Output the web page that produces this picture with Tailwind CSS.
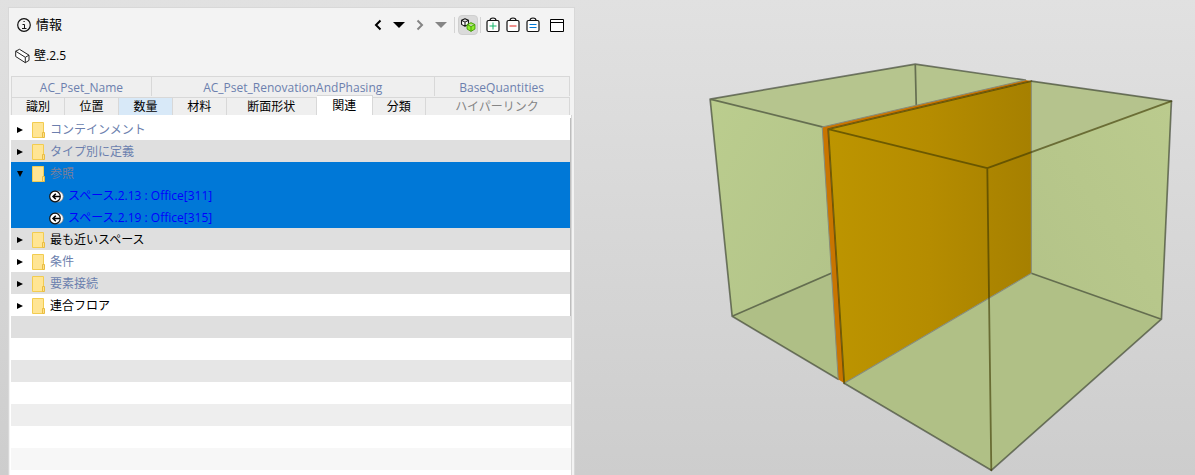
<!DOCTYPE html>
<html lang="ja">
<head>
    <meta charset="UTF-8">
    <meta name="viewport" content="width=device-width, initial-scale=1.0">
    <title>情報 - 壁.2.5</title>
    <script src="https://cdn.jsdelivr.net/npm/@tailwindcss/browser@4"></script>
</head>
<body class="h-screen overflow-hidden bg-linear-to-b from-[#e1e1e1] to-[#cdcdcd] font-['Open_Sans','Noto_Sans_CJK_JP',sans-serif] text-xs text-black">
    <!-- Shared icons -->
    <svg class="hidden">
        <symbol id="folder" viewBox="0 0 14 16">
            <path d="M.5.5h11v15H.5z" fill="#ffe594" stroke="#f2cc50"/>
            <path d="M10.500 15.500v-5h2v5z" fill="#ffe08a" stroke="#e9bd42"/>
        </symbol>
        <symbol id="space" viewBox="0 0 15 13">
            <ellipse cx="8.500" cy="6.500" rx="5.800" ry="5.500" fill="#fff" stroke="#777" stroke-width=".8"/>
            <circle cx="6" cy="6.500" r="5.300" fill="#fff" stroke="#111" stroke-width="1.200"/>
            <path d="M11 6.500H4M6.800 3.700 4 6.500l2.800 2.800" fill="none" stroke="#000" stroke-width="1.500"/>
        </symbol>
        <symbol id="bag" viewBox="0 0 14 16">
            <rect x="1" y="3.500" width="12" height="11" rx="1.500" fill="#fff" stroke="#111" stroke-width="1.200"/>
            <path d="M4 3.500Q4 1 7 1T10 3.500" fill="none" stroke="#111" stroke-width="1.200"/>
        </symbol>
        <symbol id="right" viewBox="0 0 6 6"><path d="M0 0 6 3 0 6z"/></symbol>
        <symbol id="down" viewBox="0 0 6 6"><path d="M0 0h6L3 6z"/></symbol>
        <symbol id="cube" viewBox="0 0 10 11">
            <path d="M5 .7 9.300 2.800v5L5 10.300.7 7.800v-5zM.7 2.800 5 5l4.300-2.200M5 5v5.300" stroke-linejoin="round"/>
        </symbol>
    </svg>

    <div class="grid h-full grid-cols-[21fr_23fr] pl-2">
        <section class="mt-[7px] flex min-w-0 flex-col border-x border-t border-[#d8d8d8] bg-[#f3f3f3]">
            <header class="flex h-[34px] items-center justify-between pr-[3px] pl-[7px]">
                <h1 class="flex items-center gap-1 text-[13px]">
                    <svg class="size-4" viewBox="0 0 16 16" fill="none" stroke="#111">
                        <circle cx="8" cy="8" r="6.300" stroke-width="1.200"/>
                        <path d="M6.500 7.500h2v4M6 11.500h4.500M7.500 4.500h1.200"/>
                    </svg>
                    情報
                </h1>
                <div class="flex items-center pb-px">
                    <button aria-label="戻る" class="flex h-5 w-[21px] items-center justify-center">
                        <svg class="h-3 w-2" viewBox="0 0 8 12" fill="none" stroke="#000" stroke-width="2"><path d="M6.500 1.500 2 6l4.500 4.500"/></svg>
                    </button>
                    <button aria-label="戻る履歴" class="flex h-5 w-[21px] items-center justify-center">
                        <svg class="h-[6px] w-3" viewBox="0 0 12 6"><path d="M0 0h12L6 6z"/></svg>
                    </button>
                    <button aria-label="進む" class="flex h-5 w-[21px] items-center justify-center">
                        <svg class="h-3 w-2" viewBox="0 0 8 12" fill="none" stroke="#858585" stroke-width="2"><path d="M1.500 1.500 6 6l-4.500 4.500"/></svg>
                    </button>
                    <button aria-label="進む履歴" class="flex h-5 w-[21px] items-center justify-center">
                        <svg class="h-[6px] w-3" viewBox="0 0 12 6" fill="#858585"><path d="M0 0h12L6 6z"/></svg>
                    </button>
                    <span class="mr-[3px] ml-[2px] h-4 w-px bg-[#d4d4d4]"></span>
                    <button aria-label="要素を表示" aria-pressed="true" class="flex size-5 items-center justify-center rounded-sm border border-[#cfcfcf] bg-[#dadada]">
                        <svg class="h-4 w-4 shrink-0" viewBox="0 0 16 16">
                            <use href="#cube" x="1" y="1" width="8" height="9" fill="#fff" stroke="#111" stroke-width="1.300"/>
                            <use href="#cube" x="6" y="5" width="10" height="10" fill="#8eee2a" stroke="#3f9a00"/>
                        </svg>
                    </button>
                    <span class="mx-[2px] h-4 w-px bg-[#d4d4d4]"></span>
                    <button aria-label="追加" class="flex h-5 w-5 items-center justify-center">
                        <svg class="h-4 w-[14px]" viewBox="0 0 14 16"><use href="#bag"/><path d="M3.500 9h7M7 5.500v7" stroke="#12b76a"/></svg>
                    </button>
                    <button aria-label="削除" class="flex h-5 w-5 items-center justify-center">
                        <svg class="h-4 w-[14px]" viewBox="0 0 14 16"><use href="#bag"/><path d="M3.500 9h7" stroke="#e0201b"/></svg>
                    </button>
                    <button aria-label="置換" class="flex h-5 w-5 items-center justify-center">
                        <svg class="h-4 w-[14px]" viewBox="0 0 14 16"><use href="#bag"/><path d="M3.500 7.500h7M3.500 10.500h7" stroke="#0078d7"/></svg>
                    </button>
                    <button aria-label="ウィンドウ" class="flex h-5 w-7 items-center justify-center">
                        <svg class="size-[14px]" viewBox="0 0 14 14" fill="#fff" stroke="#000"><path d="M.5 1.500h13v12H.5zM.5 4.500h13"/></svg>
                    </button>
                </div>
            </header>

            <h2 class="flex h-[34px] items-center gap-1 pb-[6px] pl-[6px] text-xs">
                <svg class="h-4 w-[15px]" viewBox="0 0 15 16" fill="#fff" stroke="#222" stroke-linejoin="round">
                    <path d="M.7 3.200 4.500 1.300 14 7.200v5.200l-3.700 2.300L.7 8.500z"/>
                    <path d="M.7 3.200 10.300 9.300 14 7.200M10.300 9.300v5.400" fill="none"/>
                </svg>
                壁.2.5
            </h2>

            <div role="tablist" class="mr-1 ml-[2px] border-l border-[#d8d8d8] bg-[#efefef]">
                <div class="grid h-[19px] grid-cols-[140fr_283fr_135fr] border-t border-[#d8d8d8] text-[#6c7fae]">
                    <button role="tab" class="border-r border-[#d8d8d8] pt-[3px] leading-4">AC_Pset_Name</button>
                    <button role="tab" class="border-r border-[#d8d8d8] pt-[3px] leading-4">AC_Pset_RenovationAndPhasing</button>
                    <button role="tab" class="border-r border-[#d8d8d8] pt-[3px] leading-4">BaseQuantities</button>
                </div>
                <div class="grid h-5 grid-cols-[53fr_54fr_54fr_54fr_90fr_56fr_53fr_144fr] items-end leading-4">
                    <button role="tab" class="h-5 border-y border-r border-[#d8d8d8]">識別</button>
                    <button role="tab" class="h-5 border-y border-r border-[#d8d8d8]">位置</button>
                    <button role="tab" class="h-5 border-y border-r border-[#d8d8d8] bg-[#d8e9f8]">数量</button>
                    <button role="tab" class="h-5 border-y border-r border-[#d8d8d8]">材料</button>
                    <button role="tab" class="h-5 border-y border-r border-[#d8d8d8]">断面形状</button>
                    <button role="tab" aria-selected="true" class="h-[22px] border-t border-r border-[#d8d8d8] bg-white pb-[2px]">関連</button>
                    <button role="tab" class="h-5 border-y border-r border-[#d8d8d8]">分類</button>
                    <button role="tab" class="h-5 border-y border-r border-[#d8d8d8] text-[#858585]">ハイパーリンク</button>
                </div>
            </div>

            <div class="mr-[2px] ml-px min-h-0 flex-1 overflow-hidden border-r border-[#d8d8d8] bg-white pt-[3px] pl-px">
                <ul role="tree" class="border-r border-[#bdbdbd]">
                    <li role="treeitem" class="flex h-[22px] items-center pt-[2px] text-[#6c7fae]">
                        <button aria-label="展開" class="flex h-4 w-[21px] items-center pl-[6px]"><svg class="size-[6px] fill-black"><use href="#right"/></svg></button>
                        <svg class="mr-1 h-4 w-[14px]"><use href="#folder"/></svg>コンテインメント
                    </li>
                    <li role="treeitem" class="flex h-[22px] items-center bg-[#dfdfdf] pt-[2px] text-[#6c7fae]">
                        <button aria-label="展開" class="flex h-4 w-[21px] items-center pl-[6px]"><svg class="size-[6px] fill-black"><use href="#right"/></svg></button>
                        <svg class="mr-1 h-4 w-[14px]"><use href="#folder"/></svg>タイプ別に定義
                    </li>
                    <li role="treeitem" aria-expanded="true" aria-selected="true" class="bg-[#0078d7]">
                        <div class="flex h-[22px] items-center pt-[2px] text-[#7c7f98]">
                            <button aria-label="折りたたむ" class="flex h-4 w-[21px] items-center pl-[6px]"><svg class="size-[6px] fill-black"><use href="#down"/></svg></button>
                            <svg class="mr-1 h-4 w-[14px]"><use href="#folder"/></svg>参照
                        </div>
                        <ul role="group" class="pl-[38px] text-[#0000ff]">
                            <li role="treeitem" class="flex h-[22px] items-center gap-1 pt-[2px]"><svg class="h-[13px] w-[15px]"><use href="#space"/></svg>スペース.2.13 : Office[311]</li>
                            <li role="treeitem" class="flex h-[22px] items-center gap-1 pt-[2px]"><svg class="h-[13px] w-[15px]"><use href="#space"/></svg>スペース.2.19 : Office[315]</li>
                        </ul>
                    </li>
                    <li role="treeitem" class="flex h-[22px] items-center bg-[#dfdfdf] pt-[2px]">
                        <button aria-label="展開" class="flex h-4 w-[21px] items-center pl-[6px]"><svg class="size-[6px] fill-black"><use href="#right"/></svg></button>
                        <svg class="mr-1 h-4 w-[14px]"><use href="#folder"/></svg>最も近いスペース
                    </li>
                    <li role="treeitem" class="flex h-[22px] items-center pt-[2px] text-[#6c7fae]">
                        <button aria-label="展開" class="flex h-4 w-[21px] items-center pl-[6px]"><svg class="size-[6px] fill-black"><use href="#right"/></svg></button>
                        <svg class="mr-1 h-4 w-[14px]"><use href="#folder"/></svg>条件
                    </li>
                    <li role="treeitem" class="flex h-[22px] items-center bg-[#dfdfdf] pt-[2px] text-[#6c7fae]">
                        <button aria-label="展開" class="flex h-4 w-[21px] items-center pl-[6px]"><svg class="size-[6px] fill-black"><use href="#right"/></svg></button>
                        <svg class="mr-1 h-4 w-[14px]"><use href="#folder"/></svg>要素接続
                    </li>
                    <li role="treeitem" class="flex h-[22px] items-center pt-[2px]">
                        <button aria-label="展開" class="flex h-4 w-[21px] items-center pl-[6px]"><svg class="size-[6px] fill-black"><use href="#right"/></svg></button>
                        <svg class="mr-1 h-4 w-[14px]"><use href="#folder"/></svg>連合フロア
                    </li>
                </ul>
                <!-- Empty rows, stripes fading out -->
                <div class="h-[22px] bg-[#dfdfdf]"></div>
                <div class="h-[22px]"></div>
                <div class="h-[22px] bg-[#e6e6e6]"></div>
                <div class="h-[22px]"></div>
                <div class="h-[22px] bg-[#eeeeee]"></div>
                <div class="h-[22px]"></div>
                <div class="h-[22px] bg-[#f7f7f7]"></div>
            </div>
        </section>

        <!-- 3D view -->
        <main class="min-w-0">
            <svg class="h-full w-full" viewBox="575 0 620 475" role="img" aria-label="3Dビュー" stroke-linejoin="round" stroke-linecap="round">
                <defs>
                    <linearGradient id="wall" x1="0" y1="0" x2="1" y2="0">
                        <stop offset="0" stop-color="#bd9500"/>
                        <stop offset=".5" stop-color="#b58c00"/>
                        <stop offset="1" stop-color="#a68000"/>
                    </linearGradient>
                    <linearGradient id="left" x1="0" y1="0" x2="1" y2="1">
                        <stop offset="0" stop-color="#bbcd8e"/>
                        <stop offset="1" stop-color="#b2c389"/>
                    </linearGradient>
                    <linearGradient id="side" x1="1" y1="0" x2="0" y2="1">
                        <stop offset="0" stop-color="#bbcb8e"/>
                        <stop offset="1" stop-color="#b3c388"/>
                    </linearGradient>
                </defs>
                <!-- left space -->
                <path d="M710 99 915 64l110 16-202 47 15 252-106-63z" fill="#b6c58e"/>
                <path d="m710 99 113 28 8 146-99 43z" fill="url(#left)"/>
                <path d="m732 316 99-43 7 106z" fill="#afbf86"/>
                <!-- right space -->
                <path d="m1031 81 140 20-10 218-170 151-147-87 187-110z" fill="#b0c086"/>
                <path d="m1031 81 140 20-140 52z" fill="#b5c38d"/>
                <path d="m1031 153 140-52-10 218-130-46z" fill="url(#side)"/>
                <g fill="none" stroke="#3b4031" stroke-opacity=".65" stroke-width="1.700">
                    <path d="M823 127 710 99 915 64l110 16M915 64l1 42M710 99l22 217 106 63M732 316l99-43M1031 81l140 20-10 218-170 151-147-87M1031 273l130 46"/>
                </g>
                <!-- wall -->
                <path d="m822 127 203-47 6 1-203 48 16 254-6-4z" fill="#c97500"/>
                <path d="m828 129 203-48v192L844 383z" fill="url(#wall)"/>
                <path d="m822 127 203-47M822 127l16 252M1031 81v192L844 383" fill="none" stroke="#858c7c"/>
                <path d="M1031 81 828 129l16 254M828 129l159 39 184-67M987 168l4 302" fill="none" stroke="#3d3900" stroke-opacity=".62" stroke-width="1.800"/>
            </svg>
        </main>
    </div>
</body>
</html>
